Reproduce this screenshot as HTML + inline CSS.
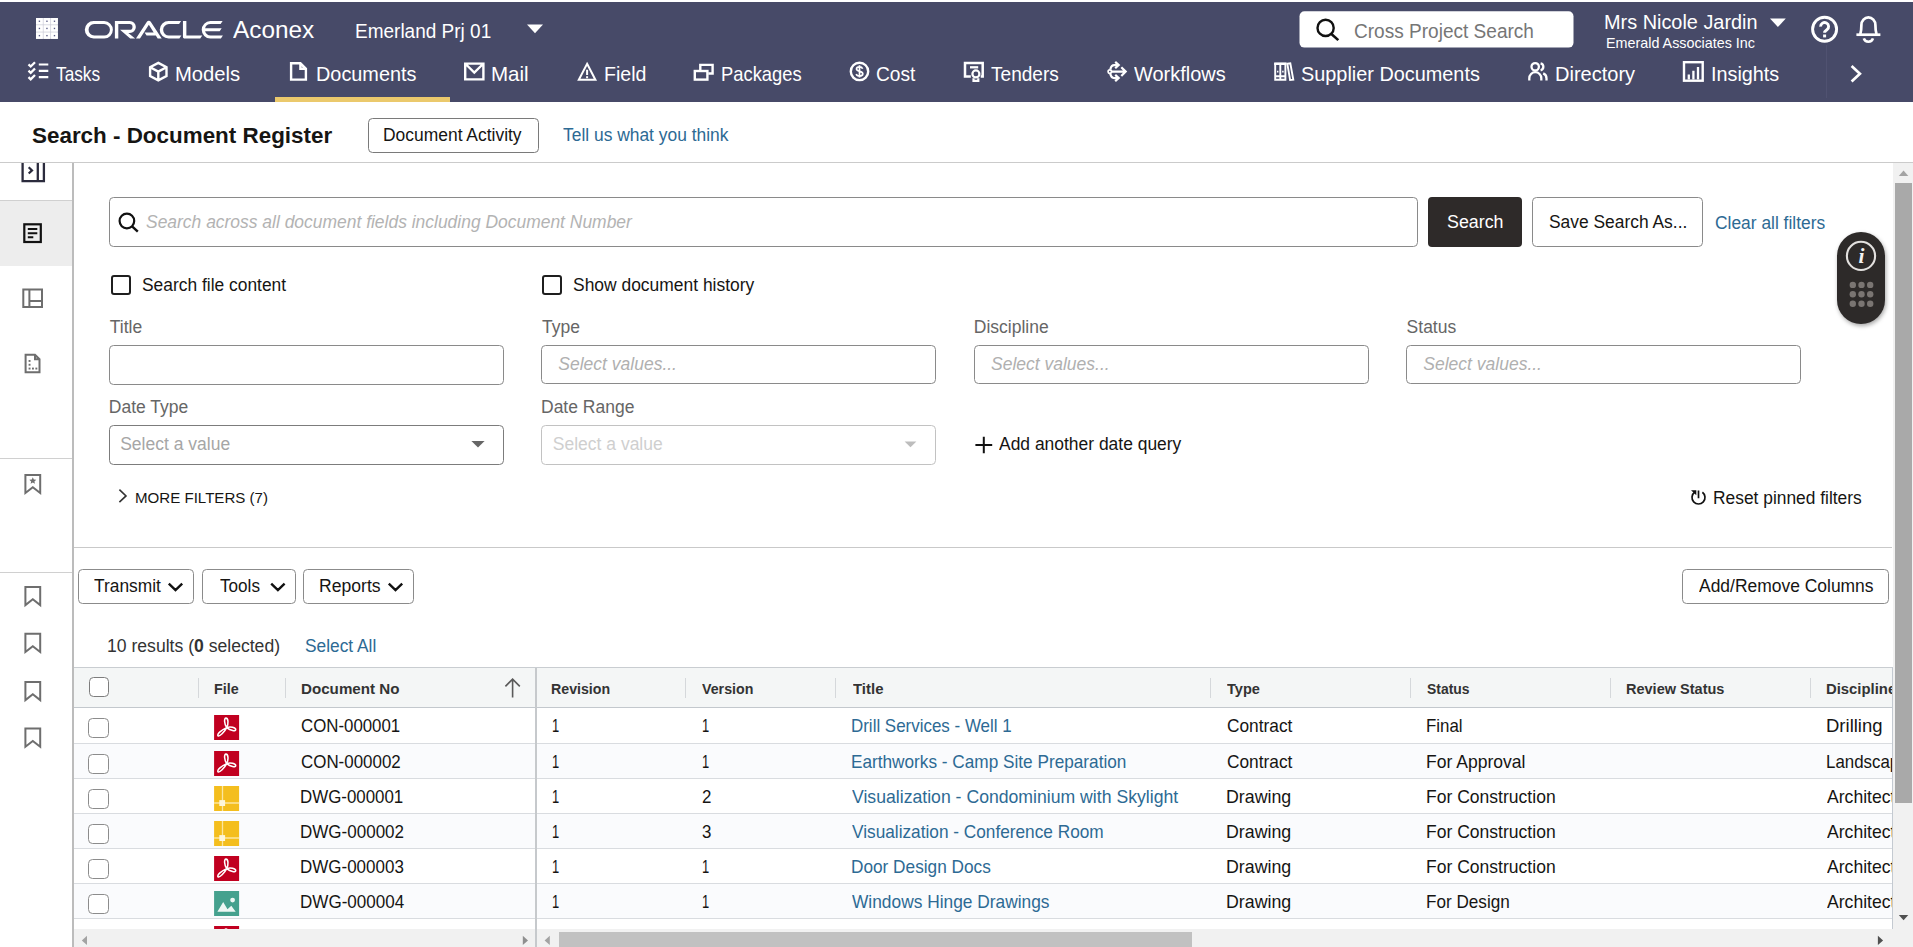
<!DOCTYPE html>
<html lang="en"><head><meta charset="utf-8"><title>Search - Document Register</title>
<style>
html,body{margin:0;padding:0}
html{width:1913px;height:947px;overflow:hidden}
body{width:1913px;height:947px;overflow:hidden;position:relative;background:#fff;font-family:"Liberation Sans",sans-serif;}
.a{position:absolute;box-sizing:border-box}
.t{position:absolute;white-space:pre;transform-origin:0 50%;display:block;line-height:30px}
.t b{font-weight:bold}
svg{position:absolute;overflow:visible}
.w{fill:none;stroke:#fff;stroke-width:2.4;stroke-linejoin:miter;stroke-linecap:butt}
.btn{position:absolute;box-sizing:border-box;border:1px solid #8b8b8b;border-radius:4.500px;background:#fff}
.inp{position:absolute;box-sizing:border-box;border:1px solid #8a8a8a;border-radius:4.500px;background:#fff}
.cb{position:absolute;box-sizing:border-box;width:20px;height:20px;border:1.5px solid #8c8c8c;border-radius:4.5px;background:#fff}
.sep{position:absolute;width:1px;background:#d5d8db}
.rl{position:absolute;left:74px;width:1819px;height:1px;background:#d9dce0}
.g{fill:none;stroke:#6e6e6e;stroke-width:2;stroke-linejoin:miter}
#root{position:absolute;left:0;top:0;width:1913px;height:947px;overflow:hidden;background:#fff}
</style></head><body><div id="root">
<!-- ===== header ===== -->
<div class="a" style="left:0;top:2px;width:1913px;height:100px;background:#474a68"></div>
<div class="a" style="left:275.3px;top:97px;width:174.4px;height:5px;background:#ebc96c"></div>
<div class="a" style="left:1826px;top:45px;width:1px;height:53px;background:#505271"></div>
<!-- app grid -->
<svg style="left:35.5px;top:17.9px" width="21.900" height="20.900" viewBox="0 0 22.4 21.2" preserveAspectRatio="none">
<rect width="22.4" height="21.2" fill="#c9cad6"/>
<g fill="#fff"><rect x="0" y="0" width="7" height="6.600"/><rect x="7.7" y="0" width="7" height="6.600"/><rect x="15.4" y="0" width="7" height="6.600"/><rect x="0" y="7.3" width="7" height="6.600"/><rect x="7.7" y="7.3" width="7" height="6.600"/><rect x="15.4" y="7.3" width="7" height="6.600"/><rect x="0" y="14.6" width="7" height="6.600"/><rect x="7.7" y="14.6" width="7" height="6.600"/><rect x="15.4" y="14.6" width="7" height="6.600"/></g>
<g fill="#5b5d86"><rect x="2.8" y="2.6" width="1.400" height="1.400"/><rect x="10.5" y="2.6" width="1.400" height="1.400"/><rect x="18.2" y="2.6" width="1.400" height="1.400"/><rect x="2.8" y="9.9" width="1.400" height="1.400"/><rect x="10.5" y="9.9" width="1.400" height="1.400"/><rect x="18.2" y="9.9" width="1.400" height="1.400"/><rect x="2.8" y="17.2" width="1.400" height="1.400"/><rect x="10.5" y="17.2" width="1.400" height="1.400"/><rect x="18.2" y="17.2" width="1.400" height="1.400"/></g>
</svg>
<!-- oracle wordmark -->
<svg style="left:85.2px;top:20.5px" width="138.1" height="17.6" viewBox="0 0.28 231 29.72" preserveAspectRatio="none">
<path fill="#fff" d="M99.61,19.52h15.24l-8.05-13L92,30H85.27l18-28.17a4.29,4.29,0,0,1,7-.05L128.32,30h-6.73l-3.17-5.25H103l-3.36-5.23m69.93,5.23V0.28h-5.72V27.16a2.76,2.76,0,0,0,.85,2,2.89,2.89,0,0,0,2.08.87h26l3.39-5.25H169.54M75,20.38A10,10,0,0,0,75,.28H50V30h5.71V5.54H74.65a4.81,4.81,0,0,1,0,9.62H58.54L75.6,30h8.29L72.43,20.38H75M14.88,30H32.15a14.86,14.86,0,0,0,0-29.71H14.88a14.86,14.86,0,1,0,0,29.71m16.88-5.23H15.26a9.62,9.62,0,0,1,0-19.23h16.5a9.62,9.62,0,1,1,0,19.23M140.25,30h17.63l3.34-5.23H140.64a9.62,9.62,0,1,1,0-19.23h16.75l3.38-5.25H140.25a14.86,14.86,0,1,0,0,29.71m69.87-5.23a9.62,9.62,0,0,1-9.26-7h24.42l3.36-5.24H200.86a9.61,9.61,0,0,1,9.26-7h16.76l3.35-5.25h-20.5a14.86,14.86,0,0,0,0,29.71h17.63l3.35-5.23h-20.6"/>
</svg>
<!-- project dropdown triangle -->
<svg style="left:0;top:0" width="1913" height="110" viewBox="0 0 1913 110">
<path fill="#fff" d="M527,24.6h16l-8,8.6z"/>
<path fill="#fff" d="M1770,18.600h15.800l-7.900,8.500z"/>
<!-- search box -->
<rect x="1299.5" y="11.3" width="274" height="36.3" rx="5" fill="#fff"/>
<circle cx="1325.6" cy="27.9" r="8.1" fill="none" stroke="#111" stroke-width="2.4"/>
<path d="M1331.4,34 L1338.3,40.1" stroke="#111" stroke-width="2.6" fill="none"/>
<!-- help -->
<circle cx="1824.600" cy="29.300" r="12" class="w" style="stroke-width:2.900"/>
<path class="w" style="stroke-width:2.900" d="M1820.600,26.600a4,4 0 1 1 6.300,3.200c-1.700,1.200-2.300,1.700-2.300,2.900"/>
<rect x="1823.100" y="34.500" width="3" height="2.900" fill="#fff"/>
<!-- bell -->
<path class="w" style="stroke-width:2.700" d="M1856.400,34.700H1880.400"/>
<path class="w" style="stroke-width:2.700" d="M1860.300,34.200c1,-3.200 1.100,-6 1.100,-9.200a7,7.600 0 0 1 14,0c0,3.200 0.100,6 1.100,9.200"/>
<path class="w" style="stroke-width:2.600" d="M1863.800,38.400a4.800,4.600 0 0 0 9.200,0"/>
<!-- nav: tasks -->
<g class="w"><path d="M38.800,64.500H48.300M38.800,70.800H48.300M38.800,77.100H48.300" style="stroke-width:2.200"/>
<path d="M28.500,64.400l2.200,2.100l4.300,-4.300M28.500,70.700l2.200,2.100l4.300,-4.300M28.500,77.200l2.200,2.100l4.300,-4.300" style="stroke-width:2.300"/></g>
<!-- models cube -->
<path class="w" d="M158.300,62.900l8.200,4.300v8.800l-8.200,4.300l-8.200,-4.300v-8.800zM150.100,67.200l8.200,4.400l8.200,-4.400M158.300,71.600v8.700"/>
<!-- documents -->
<path class="w" d="M291.100,63.300h9.300l5.500,5.500v10.800h-14.800zM300.400,63.300v5.500h5.500"/>
<!-- mail -->
<path class="w" d="M465.200,63.600h18.200v15.800h-18.200zM465.600,64l8.700,8.600l8.700,-8.600"/>
<!-- field -->
<path class="w" style="stroke-width:2" d="M587.100,63.800l8.300,16h-16.600z"/>
<path class="w" style="stroke-width:2" d="M587.100,69.800v5.200M587.100,76.200v2"/>
<!-- packages -->
<path class="w" d="M700.300,70.400v-5.500h12.300v8.600h-4.300"/>
<rect class="w" x="694.800" y="71" width="12.600" height="8.600"/>
<!-- cost -->
<circle class="w" cx="859.500" cy="71.400" r="8.700"/>
<path class="w" style="stroke-width:1.700" d="M862.600,68.800c-0.500,-1.300-1.700,-1.900-3.100,-1.900c-1.800,0-3,0.900-3,2.200c0,3,6.300,1.500,6.300,4.700c0,1.400-1.300,2.300-3.200,2.300c-1.600,0-2.900,-0.700-3.400,-2.100M859.500,65.200v12.400"/>
<!-- tenders -->
<path class="w" style="stroke-width:2.500" d="M970.800,76.400h-5.800v-13.300h17.700v13.300h-2"/>
<path class="w" style="stroke-width:2.300" d="M970,67.300h8.200"/>
<circle class="w" style="stroke-width:2.200" cx="975.900" cy="73.900" r="3.500"/>
<path class="w" style="stroke-width:2.200" d="M973.500,78.200v2.600h4.800v-2.600"/>
<!-- workflows -->
<g class="w" style="stroke-width:2.200"><circle cx="1109.800" cy="71.600" r="1.700" style="stroke-width:1.700"/><path d="M1111.600,71.600H1124.800M1121.300,67.200l4.400,4.400l-4.400,4.400"/>
<path d="M1110.300,69.400c0.600,-2.800 1.700,-4.300 4,-4.300h4.200M1115.200,61.900l3.500,3.200l-3.500,3.200"/>
<path d="M1110.300,73.800c0.600,2.800 1.700,4.300 4,4.300h4.200M1115.200,74.900l3.500,3.200l-3.500,3.200"/></g>
<!-- supplier docs (books) -->
<g class="w" style="stroke-width:1.900"><path d="M1275.200,64h10.200v15.700h-10.200zM1280.300,64v15.700M1275.200,76.300h10.200"/>
<path d="M1274.200,63.700h12.200" style="stroke-width:2.600"/>
<path d="M1287.300,63.600l3,-0.300l3,16.300l-3.200,0.300z"/>
<path d="M1277.700,70.800v1.800M1282.900,70.800v1.800" style="stroke-width:1.500"/></g>
<!-- directory -->
<g class="w" style="stroke-width:2.300"><circle cx="1535.200" cy="66.800" r="3.700"/><path d="M1529.300,80.500v-2.300a6,6 0 0 1 12,0v2.300"/>
<path d="M1540.600,63.300a3.600,3.600 0 0 1 0,7M1543.200,73.400a5.400,5.400 0 0 1 3.300,5v2.100"/></g>
<!-- insights -->
<rect class="w" x="1684" y="62.200" width="18.700" height="18.500"/>
<path class="w" style="stroke-width:2.300" d="M1688.800,79.600v-5M1693.400,79.600v-8.800M1698,79.600v-12.600"/>
<!-- chevron -->
<path class="w" style="stroke-width:2.700" d="M1851.600,66l8.300,7.700l-8.300,7.700"/>
</svg>
<!-- ===== title row ===== -->
<div class="btn" style="left:368px;top:118px;width:171px;height:35px;border-color:#7a7a7a"></div>
<div class="a" style="left:0;top:162px;width:1913px;height:1px;background:#cbcbcb"></div>
<!-- ===== sidebar ===== -->
<div class="a" style="left:0;top:200.500px;width:72px;height:65px;background:#ededed"></div>
<div class="a" style="left:0;top:200px;width:72px;height:1px;background:#d0d0d0"></div>
<div class="a" style="left:0;top:458px;width:72px;height:1px;background:#d0d0d0"></div>
<div class="a" style="left:0;top:572px;width:72px;height:1px;background:#d0d0d0"></div>
<div class="a" style="left:72px;top:163px;width:2px;height:784px;background:#bcbcbc"></div>
<svg style="left:0;top:163px" width="72" height="784" viewBox="0 163 72 784">
<!-- collapse -->
<path fill="none" stroke="#2b2b3d" stroke-width="2.300" d="M22.600,163v18.200h21.300v-18.200M37.800,163v18.200"/>
<path fill="none" stroke="#2b2b3d" stroke-width="2.200" d="M28.700,167.300l3.300,3.100l-3.300,3.100"/>
<!-- active: document register -->
<rect x="24.300" y="224.300" width="16.500" height="17.700" fill="none" stroke="#111" stroke-width="2.200"/>
<path fill="none" stroke="#111" stroke-width="2" d="M27.800,229h9.500M27.800,233.200h9.500M27.800,237.300h5.500"/>
<!-- layout -->
<path class="g" d="M23.300,289.400h18.700v17.700h-18.700zM29.400,289.400v17.700M29.400,301h12.600"/>
<!-- dotted doc -->
<path class="g" d="M25.600,354.700h9.400l4.500,4.500v13h-13.900zM35,354.700v4.500h4.500"/>
<g fill="#6e6e6e"><rect x="28.600" y="360" width="1.900" height="1.900"/><rect x="28.600" y="363.800" width="1.900" height="1.900"/><rect x="28.600" y="367.600" width="1.900" height="1.900"/><rect x="32" y="367.600" width="1.900" height="1.900"/><rect x="35.400" y="367.600" width="1.900" height="1.900"/></g>
<!-- bookmark star -->
<path class="g" d="M25.400,475v18l7.400,-5.800l7.400,5.800v-18z"/>
<path fill="#6e6e6e" d="M32.800,477.300l1,2.300l2.500,0.200l-1.900,1.600l0.600,2.400l-2.200,-1.300l-2.200,1.300l0.600,-2.400l-1.900,-1.600l2.500,-0.200z"/>
<!-- bookmarks -->
<path class="g" d="M25.400,586.900v18.200l7.400,-5.800l7.400,5.800v-18.200z"/>
<path class="g" d="M25.400,633.800v18.200l7.400,-5.800l7.400,5.800v-18.200z"/>
<path class="g" d="M25.400,681.900v18.200l7.400,-5.800l7.400,5.800v-18.200z"/>
<path class="g" d="M25.400,728.500v18.200l7.400,-5.800l7.400,5.800v-18.200z"/>
</svg>
<!-- ===== search form ===== -->
<div class="inp" style="left:109px;top:197px;width:1309px;height:50px"></div>
<svg style="left:116px;top:210px" width="26" height="26" viewBox="116 210 26 26">
<circle cx="126.900" cy="221" r="7.300" fill="none" stroke="#111" stroke-width="2.200"/><path d="M132.100,226.400l5.700,5.300" stroke="#111" stroke-width="2.400" fill="none"/></svg>
<div class="a" style="left:1428px;top:197px;width:94px;height:50px;border-radius:4px;background:#2e2a29"></div>
<div class="btn" style="left:1532px;top:197px;width:171px;height:50px;border-color:#8a8a8a"></div>
<!-- floating pill -->
<div class="a" style="left:1837px;top:232px;width:47.500px;height:92px;border-radius:24px;background:#2d2a29;box-shadow:1px 2px 4px rgba(0,0,0,.35)"></div>
<svg style="left:1837px;top:232px" width="48" height="92" viewBox="1837 232 48 92">
<circle cx="1861" cy="255.900" r="14.100" fill="none" stroke="#e3e1df" stroke-width="2.100"/>
<text x="1861.400" y="263.400" text-anchor="middle" font-family="Liberation Serif" font-style="italic" font-weight="bold" font-size="21.500" fill="#f3f2f1">i</text>
<g fill="#7a7572"><circle cx="1852.800" cy="284.900" r="3.200"/><circle cx="1861.500" cy="284.900" r="3.200"/><circle cx="1870.200" cy="284.900" r="3.200"/>
<circle cx="1852.800" cy="294.200" r="3.200"/><circle cx="1861.500" cy="294.200" r="3.200"/><circle cx="1870.200" cy="294.200" r="3.200"/>
<circle cx="1852.800" cy="303.700" r="3.200"/><circle cx="1861.500" cy="303.700" r="3.200"/><circle cx="1870.200" cy="303.700" r="3.200"/></g>
</svg>
<!-- checkboxes -->
<div class="a" style="left:110.500px;top:274.800px;width:20.500px;height:20.200px;border:2px solid #1f1f1f;border-radius:3px"></div>
<div class="a" style="left:541.500px;top:274.800px;width:20.500px;height:20.200px;border:2px solid #1f1f1f;border-radius:3px"></div>
<!-- inputs -->
<div class="inp" style="left:109px;top:345px;width:395px;height:40px"></div>
<div class="inp" style="left:541px;top:345px;width:395px;height:39px"></div>
<div class="inp" style="left:974px;top:345px;width:395px;height:39px"></div>
<div class="inp" style="left:1406px;top:345px;width:395px;height:39px"></div>
<div class="inp" style="left:109px;top:425px;width:395px;height:40px;border-color:#7c7c7c"></div>
<div class="inp" style="left:541px;top:425px;width:395px;height:40px;border-color:#c2c2c2"></div>
<svg style="left:0;top:420px" width="1913" height="100" viewBox="0 420 1913 100">
<path fill="#666" d="M471.400,441h13.200l-6.600,6.400z"/>
<path fill="#bdbdbd" d="M904.600,441.400h11.800l-5.900,5.800z"/>
<path fill="none" stroke="#111" stroke-width="2" d="M975.400,445h16.800M983.800,436.800v16.400"/>
<path fill="none" stroke="#333" stroke-width="1.600" d="M119.400,489.600l6.600,6.300l-6.600,6.300"/>
<!-- reset icon -->
<path fill="none" stroke="#111" stroke-width="1.700" d="M1694.600,492.300a6.500,6.500 0 1 0 7.800,0M1698.500,490.600v7.700"/>
<path fill="#111" d="M1691,490.300h5.300v4.900z"/>
</svg>
<div class="a" style="left:74px;top:547px;width:1819px;height:1px;background:#c9c9c9"></div>
<!-- ===== toolbar ===== -->
<div class="btn" style="left:78px;top:569px;width:116px;height:35px"></div>
<div class="btn" style="left:202px;top:569px;width:94px;height:35px"></div>
<div class="btn" style="left:303px;top:569px;width:111px;height:35px"></div>
<div class="btn" style="left:1682px;top:569px;width:207px;height:35px"></div>
<svg style="left:0;top:575px" width="500" height="24" viewBox="0 575 500 24">
<path fill="none" stroke="#111" stroke-width="2.400" d="M168.800,583.600l6.700,6.500l6.700,-6.500M271.200,583.600l6.700,6.500l6.700,-6.500M388.800,583.600l6.700,6.500l6.700,-6.500"/></svg>
<!-- ===== table ===== -->
<div class="a" style="left:74px;top:667px;width:1819px;height:41px;background:#f4f6f6;border-top:1px solid #c9cdd1;border-bottom:1.5px solid #c3c8cd"></div>
<div class="a" style="left:74px;top:743.8px;width:1819px;height:34.5px;background:#fafbfd"></div>
<div class="a" style="left:74px;top:813.7px;width:1819px;height:34.5px;background:#fafbfd"></div>
<div class="a" style="left:74px;top:883.9px;width:1819px;height:34.7px;background:#fafbfd"></div>
<div class="rl" style="top:742.8px"></div>
<div class="rl" style="top:777.8px"></div>
<div class="rl" style="top:812.7px"></div>
<div class="rl" style="top:847.7px"></div>
<div class="rl" style="top:882.9px"></div>
<div class="rl" style="top:918.1px"></div>
<div class="sep" style="left:197.8px;top:678px;height:20px"></div>
<div class="sep" style="left:285.1px;top:678px;height:20px"></div>
<div class="sep" style="left:685.1px;top:678px;height:20px"></div>
<div class="sep" style="left:834.9px;top:678px;height:20px"></div>
<div class="sep" style="left:1210.1px;top:678px;height:20px"></div>
<div class="sep" style="left:1410.3px;top:678px;height:20px"></div>
<div class="sep" style="left:1610.3px;top:678px;height:20px"></div>
<div class="sep" style="left:1809.8px;top:678px;height:20px"></div>
<div class="cb" style="left:89px;top:677.3px;width:19.8px;height:19.8px;border-color:#7d7d7d"></div>
<div class="cb" style="left:88.3px;top:717.7px;width:20.4px;height:20.2px"></div>
<div class="cb" style="left:88.3px;top:753.7px;width:20.4px;height:20.2px"></div>
<div class="cb" style="left:88.3px;top:788.7px;width:20.4px;height:20.2px"></div>
<div class="cb" style="left:88.3px;top:823.7px;width:20.4px;height:20.2px"></div>
<div class="cb" style="left:88.3px;top:858.7px;width:20.4px;height:20.2px"></div>
<div class="cb" style="left:88.3px;top:893.7px;width:20.4px;height:20.2px"></div>
<svg style="left:213.9px;top:714.9px" width="25.2" height="25" viewBox="0 0 25 25"><rect width="25" height="25" fill="#c10020"/><g fill="none" stroke="#fff" stroke-width="1.55" stroke-linejoin="round"><path d="M12.600,12.600C10.100,9 9.800,3.100 11.900,3.100C14.200,3.100 14.600,8.600 12.600,12.600z"/><path d="M12.600,12.600C10.400,16.800 5.400,22.100 3.900,20.800C2.500,19.400 7.600,14.600 12.600,12.600z"/><path d="M12.600,12.600C16.200,11.200 21.600,12.500 21.600,14.700C21.600,16.800 16.400,15.600 12.600,12.600z"/></g></svg>
<svg style="left:213.9px;top:750.9px" width="25.2" height="25" viewBox="0 0 25 25"><rect width="25" height="25" fill="#c10020"/><g fill="none" stroke="#fff" stroke-width="1.55" stroke-linejoin="round"><path d="M12.600,12.600C10.100,9 9.800,3.100 11.900,3.100C14.200,3.100 14.600,8.600 12.600,12.600z"/><path d="M12.600,12.600C10.400,16.800 5.400,22.100 3.900,20.800C2.500,19.400 7.600,14.600 12.600,12.600z"/><path d="M12.600,12.600C16.200,11.200 21.600,12.500 21.600,14.700C21.600,16.800 16.400,15.600 12.600,12.600z"/></g></svg>
<svg style="left:213.9px;top:786.1px" width="25.2" height="25" viewBox="0 0 25 25"><rect width="25" height="25" fill="#f4be1e"/><path stroke="#fbe6a0" stroke-width="1.300" fill="none" d="M8.400,0v25M0,17h25"/><rect x="5.200" y="14.100" width="5.800" height="5.900" fill="#fdf6dc"/></svg>
<svg style="left:213.9px;top:821.0px" width="25.2" height="25" viewBox="0 0 25 25"><rect width="25" height="25" fill="#f4be1e"/><path stroke="#fbe6a0" stroke-width="1.300" fill="none" d="M8.400,0v25M0,17h25"/><rect x="5.200" y="14.100" width="5.800" height="5.900" fill="#fdf6dc"/></svg>
<svg style="left:213.9px;top:856.0px" width="25.2" height="25" viewBox="0 0 25 25"><rect width="25" height="25" fill="#c10020"/><g fill="none" stroke="#fff" stroke-width="1.55" stroke-linejoin="round"><path d="M12.600,12.600C10.100,9 9.800,3.100 11.900,3.100C14.200,3.100 14.600,8.600 12.600,12.600z"/><path d="M12.600,12.600C10.400,16.800 5.400,22.100 3.900,20.800C2.500,19.400 7.600,14.600 12.600,12.600z"/><path d="M12.600,12.600C16.200,11.200 21.600,12.500 21.600,14.700C21.600,16.800 16.400,15.600 12.600,12.600z"/></g></svg>
<svg style="left:213.9px;top:891.2px" width="25.2" height="25" viewBox="0 0 25 25"><rect width="25" height="25" fill="#45a18e"/><path fill="#eef7f4" d="M3.300,20.700l5.800,-9.700l4.300,7.200l3.800,-3.400l4.400,5.900z"/><circle cx="18.500" cy="9.100" r="2.400" fill="#eef7f4"/></svg>
<svg style="left:213.9px;top:926.1px" width="25.2" height="25" viewBox="0 0 25 25"><rect width="25" height="25" fill="#c10020"/><g fill="none" stroke="#fff" stroke-width="1.55" stroke-linejoin="round"><path d="M12.600,12.600C10.100,9 9.800,3.100 11.900,3.100C14.200,3.100 14.600,8.600 12.600,12.600z"/><path d="M12.600,12.600C10.400,16.800 5.400,22.100 3.900,20.800C2.500,19.400 7.600,14.600 12.600,12.600z"/><path d="M12.600,12.600C16.200,11.200 21.600,12.500 21.600,14.700C21.600,16.800 16.400,15.600 12.600,12.600z"/></g></svg>
<svg style="left:500px;top:675px" width="26" height="26" viewBox="500 675 26 26"><path fill="none" stroke="#5a5a5a" stroke-width="1.600" d="M512.600,679v18.600M505.400,686.400l7.200,-7.300l7.200,7.300"/></svg>
<span class="t" style="left:233.40px;top:15px;font-size:24.5px;color:#fff;transform:scaleX(0.9942);">Aconex</span>
<span class="t" style="left:354.87px;top:16px;font-size:20.5px;color:#fff;transform:scaleX(0.9266);">Emerland Prj 01</span>
<span class="t" style="left:1354.45px;top:16px;font-size:20px;color:#767676;transform:scaleX(0.9522);">Cross Project Search</span>
<span class="t" style="left:1603.98px;top:7px;font-size:19.5px;color:#fff;transform:scaleX(1.0197);">Mrs Nicole Jardin</span>
<span class="t" style="left:1606.44px;top:28px;font-size:15px;color:#fff;transform:scaleX(0.9556);">Emerald Associates Inc</span>
<span class="t" style="left:56.20px;top:59px;font-size:20.3px;color:#fff;transform:scaleX(0.8511);">Tasks</span>
<span class="t" style="left:175.30px;top:59px;font-size:20.3px;color:#fff;transform:scaleX(0.9978);">Models</span>
<span class="t" style="left:315.72px;top:59px;font-size:20.3px;color:#fff;transform:scaleX(0.9790);">Documents</span>
<span class="t" style="left:491.19px;top:59px;font-size:20.3px;color:#fff;transform:scaleX(1.0118);">Mail</span>
<span class="t" style="left:604.14px;top:59px;font-size:20.3px;color:#fff;transform:scaleX(0.9645);">Field</span>
<span class="t" style="left:720.89px;top:59px;font-size:20.3px;color:#fff;transform:scaleX(0.9053);">Packages</span>
<span class="t" style="left:876.26px;top:59px;font-size:20.3px;color:#fff;transform:scaleX(0.9448);">Cost</span>
<span class="t" style="left:991.00px;top:59px;font-size:20.3px;color:#fff;transform:scaleX(0.9401);">Tenders</span>
<span class="t" style="left:1134.40px;top:59px;font-size:20.3px;color:#fff;transform:scaleX(0.9848);">Workflows</span>
<span class="t" style="left:1300.90px;top:59px;font-size:20.3px;color:#fff;transform:scaleX(0.9793);">Supplier Documents</span>
<span class="t" style="left:1554.51px;top:59px;font-size:20.3px;color:#fff;transform:scaleX(0.9877);">Directory</span>
<span class="t" style="left:1710.62px;top:59px;font-size:20.3px;color:#fff;transform:scaleX(0.9759);">Insights</span>
<span class="t" style="left:32.10px;top:121px;font-size:22.5px;color:#161513;font-weight:bold;transform:scaleX(0.9961);">Search - Document Register</span>
<span class="t" style="left:383.40px;top:120px;font-size:17.5px;color:#161513;transform:scaleX(0.9965);">Document Activity</span>
<span class="t" style="left:563.30px;top:120px;font-size:17.5px;color:#2d6a94;transform:scaleX(0.9947);">Tell us what you think</span>
<span class="t" style="left:146.00px;top:207px;font-size:17.5px;color:#b3b3b3;font-style:italic;transform:scaleX(0.9970);">Search across all document fields including Document Number</span>
<span class="t" style="left:1447.20px;top:207px;font-size:17.5px;color:#fff;transform:scaleX(1.0198);">Search</span>
<span class="t" style="left:1548.60px;top:207px;font-size:17.5px;color:#161513;transform:scaleX(0.9942);">Save Search As...</span>
<span class="t" style="left:1714.60px;top:208px;font-size:17.5px;color:#2d6a94;transform:scaleX(0.9936);">Clear all filters</span>
<span class="t" style="left:142.00px;top:270px;font-size:17.5px;color:#161513;transform:scaleX(0.9939);">Search file content</span>
<span class="t" style="left:573.00px;top:270px;font-size:17.5px;color:#161513;transform:scaleX(0.9965);">Show document history</span>
<span class="t" style="left:109.80px;top:312px;font-size:17.5px;color:#666;">Title</span>
<span class="t" style="left:542.00px;top:312px;font-size:17.5px;color:#666;">Type</span>
<span class="t" style="left:973.80px;top:312px;font-size:17.5px;color:#666;">Discipline</span>
<span class="t" style="left:1406.60px;top:312px;font-size:17.5px;color:#666;">Status</span>
<span class="t" style="left:558.30px;top:349px;font-size:17.5px;color:#b0b0b0;font-style:italic;">Select values...</span>
<span class="t" style="left:991.00px;top:349px;font-size:17.5px;color:#b0b0b0;font-style:italic;">Select values...</span>
<span class="t" style="left:1423.30px;top:349px;font-size:17.5px;color:#b0b0b0;font-style:italic;">Select values...</span>
<span class="t" style="left:108.80px;top:392px;font-size:17.5px;color:#666;">Date Type</span>
<span class="t" style="left:541.00px;top:392px;font-size:17.5px;color:#666;">Date Range</span>
<span class="t" style="left:120.20px;top:429px;font-size:17.5px;color:#a6a6a6;">Select a value</span>
<span class="t" style="left:552.80px;top:429px;font-size:17.5px;color:#cfcfcf;">Select a value</span>
<span class="t" style="left:998.80px;top:429px;font-size:17.5px;color:#161513;transform:scaleX(0.9969);">Add another date query</span>
<span class="t" style="left:134.69px;top:483px;font-size:15px;color:#161513;transform:scaleX(1.0058);">MORE FILTERS (7)</span>
<span class="t" style="left:1712.71px;top:483px;font-size:17.5px;color:#161513;transform:scaleX(0.9929);">Reset pinned filters</span>
<span class="t" style="left:93.90px;top:571px;font-size:17.5px;color:#161513;transform:scaleX(0.9919);">Transmit</span>
<span class="t" style="left:220.10px;top:571px;font-size:17.5px;color:#161513;transform:scaleX(0.9780);">Tools</span>
<span class="t" style="left:318.70px;top:571px;font-size:17.5px;color:#161513;transform:scaleX(1.0045);">Reports</span>
<span class="t" style="left:1698.50px;top:571px;font-size:17.5px;color:#161513;transform:scaleX(0.9970);">Add/Remove Columns</span>
<span class="t" style="left:107.39px;top:631px;font-size:17.5px;color:#333;transform:scaleX(1.0051);">10 results (<b>0</b> selected)</span>
<span class="t" style="left:304.90px;top:631px;font-size:17.5px;color:#2d6a94;transform:scaleX(0.9895);">Select All</span>
<span class="t" style="left:213.84px;top:674px;font-size:15px;color:#333;font-weight:bold;transform:scaleX(0.9552);">File</span>
<span class="t" style="left:301.19px;top:674px;font-size:15px;color:#333;font-weight:bold;transform:scaleX(1.0100);">Document No</span>
<span class="t" style="left:551.35px;top:674px;font-size:15px;color:#333;font-weight:bold;transform:scaleX(0.9453);">Revision</span>
<span class="t" style="left:702.10px;top:674px;font-size:15px;color:#333;font-weight:bold;transform:scaleX(0.9476);">Version</span>
<span class="t" style="left:852.50px;top:674px;font-size:15px;color:#333;font-weight:bold;transform:scaleX(0.9960);">Title</span>
<span class="t" style="left:1227.40px;top:674px;font-size:15px;color:#333;font-weight:bold;transform:scaleX(0.9716);">Type</span>
<span class="t" style="left:1427.10px;top:674px;font-size:15px;color:#333;font-weight:bold;transform:scaleX(0.9275);">Status</span>
<span class="t" style="left:1625.93px;top:674px;font-size:15px;color:#333;font-weight:bold;transform:scaleX(0.9675);">Review Status</span>
<span class="t" style="left:301.40px;top:711px;font-size:18.2px;color:#161513;transform:scaleX(0.9258);">CON-000001</span>
<span class="t" style="left:551.89px;top:711px;font-size:18.2px;color:#161513;transform:scaleX(0.7111);">1</span>
<span class="t" style="left:701.89px;top:711px;font-size:18.2px;color:#161513;transform:scaleX(0.7111);">1</span>
<span class="t" style="left:850.87px;top:711px;font-size:18.2px;color:#2d6a94;transform:scaleX(0.9314);">Drill Services - Well 1</span>
<span class="t" style="left:1226.60px;top:711px;font-size:18.2px;color:#161513;transform:scaleX(0.9507);">Contract</span>
<span class="t" style="left:1425.87px;top:711px;font-size:18.2px;color:#161513;transform:scaleX(0.9283);">Final</span>
<span class="t" style="left:1825.88px;top:711px;font-size:18.2px;color:#161513;transform:scaleX(1.0174);">Drilling</span>
<span class="t" style="left:301.40px;top:747px;font-size:18.2px;color:#161513;transform:scaleX(0.9304);">CON-000002</span>
<span class="t" style="left:551.89px;top:747px;font-size:18.2px;color:#161513;transform:scaleX(0.7111);">1</span>
<span class="t" style="left:701.89px;top:747px;font-size:18.2px;color:#161513;transform:scaleX(0.7111);">1</span>
<span class="t" style="left:850.85px;top:747px;font-size:18.2px;color:#2d6a94;transform:scaleX(0.9460);">Earthworks - Camp Site Preparation</span>
<span class="t" style="left:1226.60px;top:747px;font-size:18.2px;color:#161513;transform:scaleX(0.9507);">Contract</span>
<span class="t" style="left:1425.84px;top:747px;font-size:18.2px;color:#161513;transform:scaleX(0.9650);">For Approval</span>
<span class="t" style="left:1825.67px;top:747px;font-size:18.2px;color:#161513;transform:scaleX(0.9280);">Landscaping</span>
<span class="t" style="left:300.47px;top:782px;font-size:18.2px;color:#161513;transform:scaleX(0.9284);">DWG-000001</span>
<span class="t" style="left:551.89px;top:782px;font-size:18.2px;color:#161513;transform:scaleX(0.7111);">1</span>
<span class="t" style="left:702.00px;top:782px;font-size:18.2px;color:#161513;transform:scaleX(0.9300);">2</span>
<span class="t" style="left:851.80px;top:782px;font-size:18.2px;color:#2d6a94;transform:scaleX(0.9699);">Visualization - Condominium with Skylight</span>
<span class="t" style="left:1225.62px;top:782px;font-size:18.2px;color:#161513;transform:scaleX(0.9784);">Drawing</span>
<span class="t" style="left:1425.84px;top:782px;font-size:18.2px;color:#161513;transform:scaleX(0.9643);">For Construction</span>
<span class="t" style="left:1826.60px;top:782px;font-size:18.2px;color:#161513;transform:scaleX(0.9677);">Architectural</span>
<span class="t" style="left:300.46px;top:817px;font-size:18.2px;color:#161513;transform:scaleX(0.9357);">DWG-000002</span>
<span class="t" style="left:551.89px;top:817px;font-size:18.2px;color:#161513;transform:scaleX(0.7111);">1</span>
<span class="t" style="left:702.00px;top:817px;font-size:18.2px;color:#161513;transform:scaleX(0.9300);">3</span>
<span class="t" style="left:851.80px;top:817px;font-size:18.2px;color:#2d6a94;transform:scaleX(0.9478);">Visualization - Conference Room</span>
<span class="t" style="left:1225.62px;top:817px;font-size:18.2px;color:#161513;transform:scaleX(0.9784);">Drawing</span>
<span class="t" style="left:1425.84px;top:817px;font-size:18.2px;color:#161513;transform:scaleX(0.9643);">For Construction</span>
<span class="t" style="left:1826.60px;top:817px;font-size:18.2px;color:#161513;transform:scaleX(0.9677);">Architectural</span>
<span class="t" style="left:300.47px;top:852px;font-size:18.2px;color:#161513;transform:scaleX(0.9339);">DWG-000003</span>
<span class="t" style="left:551.89px;top:852px;font-size:18.2px;color:#161513;transform:scaleX(0.7111);">1</span>
<span class="t" style="left:701.89px;top:852px;font-size:18.2px;color:#161513;transform:scaleX(0.7111);">1</span>
<span class="t" style="left:850.85px;top:852px;font-size:18.2px;color:#2d6a94;transform:scaleX(0.9469);">Door Design Docs</span>
<span class="t" style="left:1225.62px;top:852px;font-size:18.2px;color:#161513;transform:scaleX(0.9784);">Drawing</span>
<span class="t" style="left:1425.84px;top:852px;font-size:18.2px;color:#161513;transform:scaleX(0.9643);">For Construction</span>
<span class="t" style="left:1826.60px;top:852px;font-size:18.2px;color:#161513;transform:scaleX(0.9677);">Architectural</span>
<span class="t" style="left:300.46px;top:887px;font-size:18.2px;color:#161513;transform:scaleX(0.9375);">DWG-000004</span>
<span class="t" style="left:551.89px;top:887px;font-size:18.2px;color:#161513;transform:scaleX(0.7111);">1</span>
<span class="t" style="left:701.89px;top:887px;font-size:18.2px;color:#161513;transform:scaleX(0.7111);">1</span>
<span class="t" style="left:851.80px;top:887px;font-size:18.2px;color:#2d6a94;transform:scaleX(0.9531);">Windows Hinge Drawings</span>
<span class="t" style="left:1225.62px;top:887px;font-size:18.2px;color:#161513;transform:scaleX(0.9784);">Drawing</span>
<span class="t" style="left:1425.86px;top:887px;font-size:18.2px;color:#161513;transform:scaleX(0.9420);">For Design</span>
<span class="t" style="left:1826.60px;top:887px;font-size:18.2px;color:#161513;transform:scaleX(0.9677);">Architectural</span>
<span class="t" style="left:1826.21px;top:674px;font-size:15px;color:#333;font-weight:bold;transform:scaleX(0.9900);">Discipline</span>
<!-- ===== overlays ===== -->
<div class="a" style="left:535px;top:668px;width:2px;height:279px;background:#c6c9cc"></div>
<div class="a" style="left:1892px;top:163px;width:21px;height:504px;background:#fff"></div>
<div class="a" style="left:1892px;top:667px;width:1.2px;height:262px;background:#c4cad1"></div>
<div class="a" style="left:1893.2px;top:163px;width:19.8px;height:766px;background:#f1f1f1"></div>
<div class="a" style="left:1895.2px;top:183px;width:16.8px;height:619.5px;background:#a9a9a9"></div>
<svg style="left:1893px;top:163px" width="20" height="766" viewBox="1893 163 20 766"><path fill="#a3a3a3" d="M1898.800,176h9.500l-4.750,-5.400z"/><path fill="#505050" d="M1898.800,914.900h9.500l-4.750,5.400z"/></svg>
<div class="a" style="left:74px;top:929px;width:1839px;height:18px;background:#f1f1f1"></div>
<div class="a" style="left:535px;top:929px;width:2px;height:18px;background:#c6c9cc"></div>
<div class="a" style="left:558.5px;top:931.8px;width:633.3px;height:15.2px;background:#c1c1c1"></div>
<svg style="left:74px;top:929px" width="1839" height="18" viewBox="74 929 1839 18"><g fill="#a3a3a3"><path d="M87,935.700v9.400l-5.200,-4.700z"/><path d="M549.800,935.700v9.400l-5.200,-4.700z"/></g><path fill="#8f8f8f" d="M522.800,935.700v9.400l5.200,-4.700z"/><path fill="#505050" d="M1877.900,935.700v9.400l5.200,-4.700z"/></svg>
</div></body></html>
